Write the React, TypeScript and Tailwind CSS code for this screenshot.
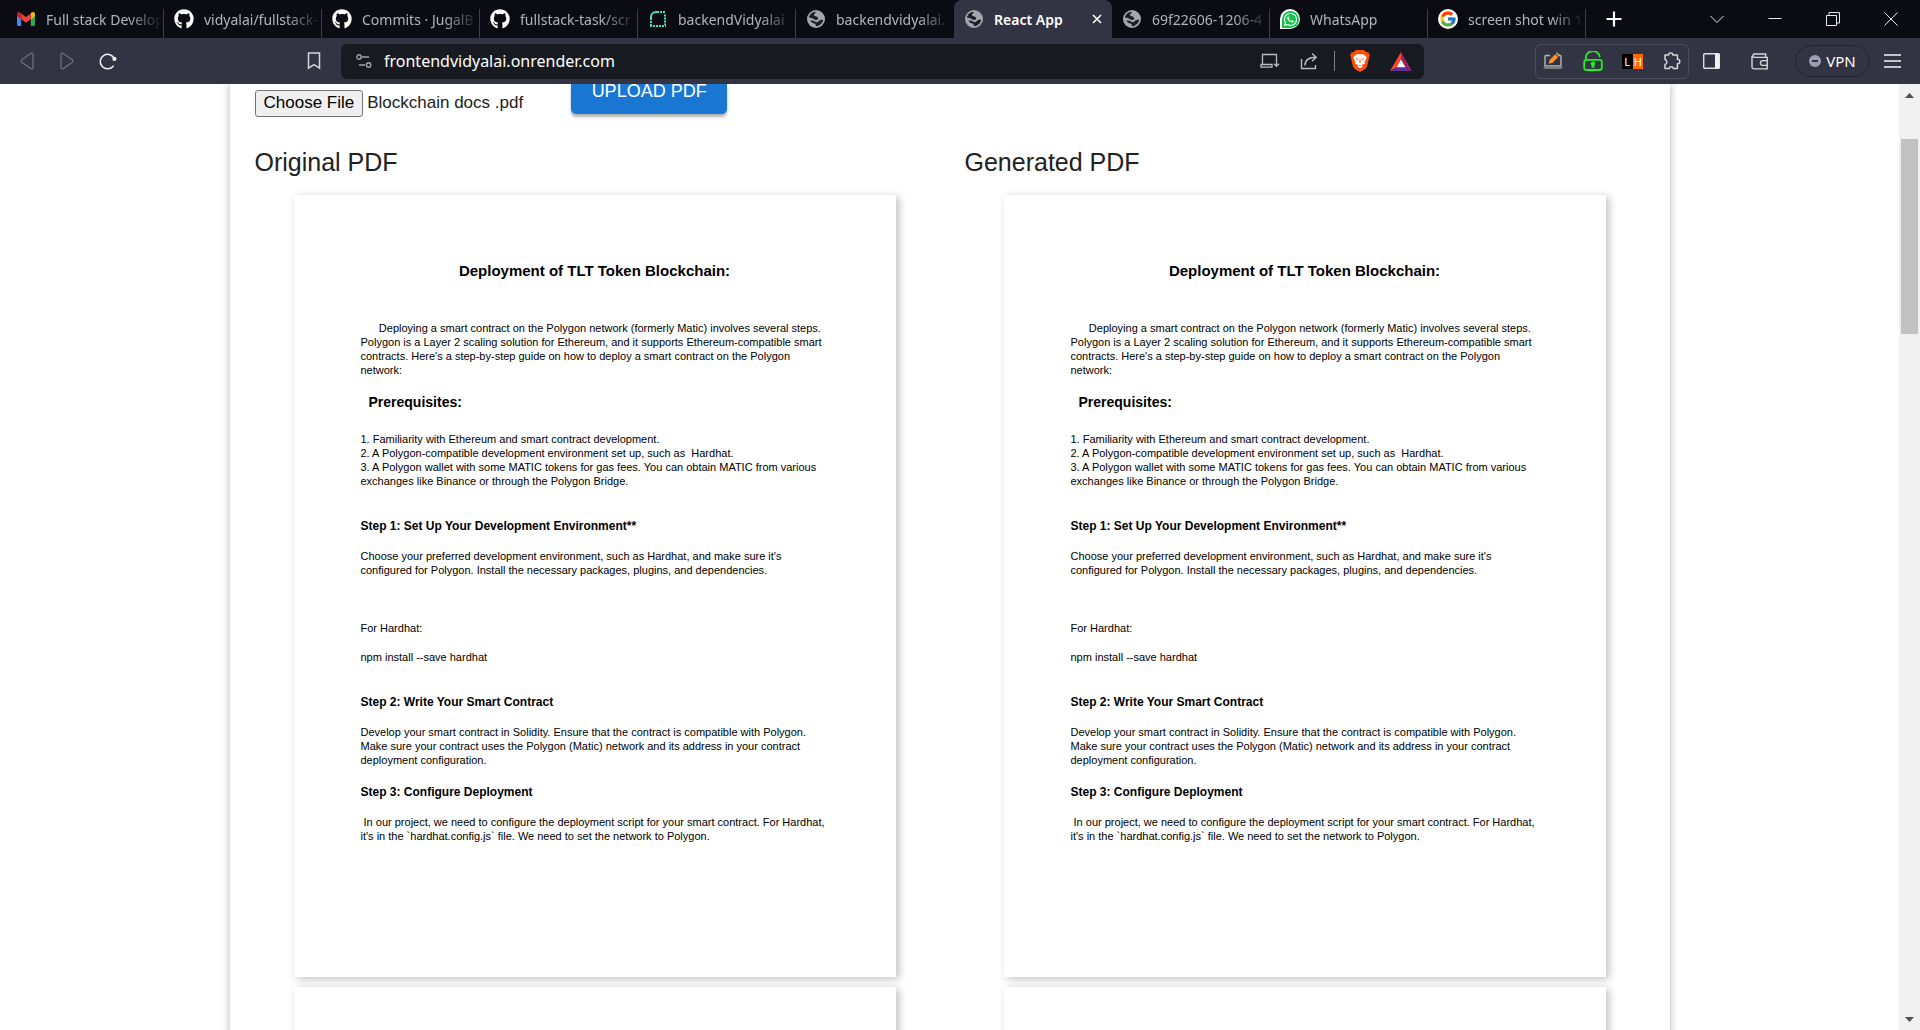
import React from 'react';
import { FaGithub, FaWhatsapp } from 'react-icons/fa';
import { FcGoogle } from 'react-icons/fc';

type IconProps = { className?: string };

function GmailIcon() {
  return (
    <svg viewBox="0 0 18 14" className="h-[14px] w-[18px]">
      <path d="M0 2.2V12.6C0 13.4.6 14 1.4 14H4.2V5.6Z" fill="#4285f4" />
      <path d="M18 2.2V12.6C18 13.4 17.4 14 16.6 14H13.8V5.6Z" fill="#34a853" />
      <path d="M13.8 1.4V7.2L18 4V2.2C18 .3 16 -.7 14.5 .6Z" fill="#fbbc04" />
      <path d="M0 2.2V4L4.2 7.2V1.4L3.5.8C2-.6 0 .3 0 2.2Z" fill="#c5221f" />
      <path d="M4.2 7.2V1.4L9 5 13.8 1.4V7.2L9 10.8Z" fill="#ea4335" />
    </svg>
  );
}

function GithubIcon() {
  return <FaGithub className="size-5 text-white" />;
}

function RenderIcon() {
  return (
    <svg viewBox="0 0 16 16" className="size-4" fill="none" stroke="#46e3b7" strokeWidth="2">
      <path d="M1 9V6A5 5 0 0 1 6 1H9" />
      <path d="M10 1H16" strokeDasharray="2 1" />
      <path d="M15 3.5V14" strokeDasharray="2 1" />
      <path d="M1 10V14" strokeDasharray="2 1" />
      <path d="M0 15H16" strokeDasharray="2 1" />
    </svg>
  );
}

function GlobeIcon() {
  return (
    <svg viewBox="0 0 18 18" className="size-[18px]">
      <circle cx="9" cy="9" r="9" fill="#a3a6ad" />
      <path
        d="M1.9 7.6C2.5 4.6 5.2 2 8.6 1.8 9 3 7.6 3.4 7 4.6 6.6 5.6 7.8 6.2 9.2 6.4 11.2 6.8 11.8 8.4 10.6 9.6 9.6 10.4 8 9.8 7 9.2 5.4 8.2 3.8 8 1.9 7.6Z"
        fill="#1d1e28"
      />
      <path
        d="M3.4 10.4C5.4 10.4 7.4 10.8 8.4 11.8 9.4 12.4 10.6 12.2 11.4 11.4 12.4 10.2 14 9.8 16.2 9.8 15.6 13.4 12.6 16.2 9 16.2 8.6 15 8.8 14.2 7.6 13.6 6 13 4.2 12.4 3.4 10.4Z"
        fill="#1d1e28"
      />
    </svg>
  );
}

function WhatsAppIcon() {
  return (
    <span className="flex size-5 items-center justify-center rounded-full rounded-bl-sm bg-white">
      <span className="flex size-[17px] items-center justify-center rounded-full rounded-bl-sm bg-[#12c04a]">
        <FaWhatsapp className="size-[15px] text-white" />
      </span>
    </span>
  );
}

function GoogleIcon() {
  return (
    <span className="flex size-5 items-center justify-center rounded-full bg-white">
      <FcGoogle className="size-[18px]" />
    </span>
  );
}

type Tab = { title: string; icon: React.ReactNode; active?: boolean; bar?: boolean };

const tabs: Tab[] = [
  { title: 'Full stack Develop', icon: <GmailIcon />, bar: true },
  { title: 'vidyalai/fullstack-', icon: <GithubIcon />, bar: true },
  { title: 'Commits · JugalB', icon: <GithubIcon />, bar: true },
  { title: 'fullstack-task/scr', icon: <GithubIcon />, bar: true },
  { title: 'backendVidyalai', icon: <RenderIcon />, bar: true },
  { title: 'backendvidyalai.', icon: <GlobeIcon /> },
  { title: 'React App', icon: <GlobeIcon />, active: true },
  { title: '69f22606-1206-4', icon: <GlobeIcon />, bar: true },
  { title: 'WhatsApp', icon: <WhatsAppIcon />, bar: true },
  { title: 'screen shot win 1', icon: <GoogleIcon />, bar: true },
];

function TabIcon({ children }: { children: React.ReactNode }) {
  return <span className="flex size-5 shrink-0 items-center justify-center">{children}</span>;
}

function TabItem({ tab }: { tab: Tab }) {
  if (tab.active) {
    return (
      <div className="flex h-full min-w-0 items-center gap-[10px] rounded-t-lg bg-[#323443] px-[10px]">
        <TabIcon>{tab.icon}</TabIcon>
        <button className="min-w-0 flex-1 text-left font-semibold whitespace-nowrap text-white">{tab.title}</button>
        <button aria-label="Close tab" className="shrink-0 text-white">
          <svg viewBox="0 0 10 10" className="size-[10px]" stroke="currentColor" strokeWidth="1.6">
            <path d="M1 1L9 9M9 1L1 9" />
          </svg>
        </button>
      </div>
    );
  }
  return (
    <div className="flex h-full min-w-0 items-end">
      <button className="flex h-full min-w-0 flex-1 items-center gap-[10px] pl-[10px] text-[#b4b4b8]">
        <TabIcon>{tab.icon}</TabIcon>
        <span className="min-w-0 flex-1 overflow-hidden text-left whitespace-nowrap [mask-image:linear-gradient(to_right,black_70%,transparent)]">
          {tab.title}
        </span>
      </button>
      <span className={tab.bar ? 'h-[29px] w-px bg-[#3f3f45]' : 'w-px'} />
    </div>
  );
}

function TabStrip() {
  return (
    <div className="flex h-[38px] items-center bg-[#0b0b14] pl-[6px] font-['Noto_Sans',sans-serif] text-[14px]">
      <div className="grid h-full w-[1580px] min-w-0 grid-cols-10">
        {tabs.map((t) => (
          <TabItem key={t.title} tab={t} />
        ))}
      </div>
      <button aria-label="New tab" className="ml-5 shrink-0 text-white">
        <svg viewBox="0 0 16 16" className="size-4" stroke="currentColor" strokeWidth="2.2">
          <path d="M8 0.5V15.5M0.5 8H15.5" />
        </svg>
      </button>
      <div className="ml-auto flex shrink-0 items-center gap-11 pr-[22px] text-[#e8e8ea]">
        <button aria-label="Search tabs">
          <svg viewBox="0 0 14 14" className="size-[14px]" fill="none" stroke="currentColor" strokeWidth="1">
            <path d="M0.5 4L7 10.5 13.5 4" />
          </svg>
        </button>
        <button aria-label="Minimize">
          <svg viewBox="0 0 14 14" className="size-[14px]" stroke="currentColor" strokeWidth="1">
            <path d="M0.5 6.5H13.5" />
          </svg>
        </button>
        <button aria-label="Restore">
          <svg viewBox="0 0 14 14" className="size-[14px]" fill="none" stroke="currentColor" strokeWidth="1">
            <path d="M0.5 3.5H10.5V13.5H0.5ZM3 3V0.5H13.5V11H11" />
          </svg>
        </button>
        <button aria-label="Close">
          <svg viewBox="0 0 14 14" className="size-[14px]" stroke="currentColor" strokeWidth="1">
            <path d="M0.5 0.5L13.5 13.5M13.5 0.5L0.5 13.5" />
          </svg>
        </button>
      </div>
    </div>
  );
}

function BackIcon({ className }: IconProps) {
  return (
    <svg viewBox="0 0 14 18" className={className} fill="none" stroke="#6c6e7b" strokeWidth="1.3" strokeLinejoin="round">
      <path d="M11 1.3L1.8 7.8C1 8.4 1 9.6 1.8 10.2L11 16.7C12 17.2 13 16.6 13 15.6V2.4C13 1.4 12 .8 11 1.3Z" />
    </svg>
  );
}

function ReloadIcon() {
  return (
    <svg viewBox="0 0 18 18" className="size-[18px]" fill="none" stroke="#f2f2f4" strokeWidth="1.5" strokeLinecap="round">
      <path d="M15.4 7A7.3 7.3 0 1 0 14.2 14.2" />
      <circle cx="15.4" cy="6.9" r="2.1" fill="#f2f2f4" stroke="none" />
    </svg>
  );
}

function InstallIcon() {
  return (
    <svg viewBox="0 0 20 16" className="h-4 w-5" fill="none" stroke="#b9bbc0" strokeWidth="1.3">
      <path d="M16.5 8V1.5H2.5V11.5" />
      <path d="M1 11.5H12V14.2H1Z" />
      <path d="M16.5 7.5V13M14 10.8L16.5 13.3 19 10.8" />
    </svg>
  );
}

function ShareIcon() {
  return (
    <svg viewBox="0 0 18 18" className="size-[18px]" fill="none" stroke="#b9bbc0" strokeWidth="1.4">
      <path d="M1.5 7V16.5H15.5V13" />
      <path d="M5 13.5C5 8 8 5.3 16 5.3M12 1.5L16.2 5.3 12 9.3" />
    </svg>
  );
}

function BraveIcon() {
  return (
    <svg viewBox="0 0 20 22" className="h-[22px] w-5">
      <path d="M6 0H14L16.4 2.2 18.4 2.3 20 5 19.2 7.2 17.2 16C16.8 17.6 15.6 18.6 14 19.8L10 22 6 19.8C4.4 18.6 3.2 17.6 2.8 16L.8 7.2 0 5 1.6 2.3 3.6 2.2Z" fill="#fb5006" />
      <path
        d="M10 4.4L12.4 4 15.6 5.8 16.6 7.6 16 9.4 14.4 12 15 13.4 13.4 14.8 11.6 14 12.6 16.4 10 18.2 7.4 16.4 8.4 14 6.6 14.8 5 13.4 5.6 12 4 9.4 3.4 7.6 4.4 5.8 7.6 4Z"
        fill="#fff"
      />
      <path d="M5.6 8L8.4 9 8 10.4ZM14.4 8L11.6 9 12 10.4ZM10 8.2L10.8 12 10 13 9.2 12ZM8 16L10 15 12 16" fill="#fb5006" />
    </svg>
  );
}

function BatIcon() {
  return (
    <svg viewBox="0 0 22 19" className="h-[19px] w-[22px]">
      <path d="M11 0L0 19 6.6 15.2 11 7.6Z" fill="#ff4724" />
      <path d="M11 0L22 19 15.4 15.2 11 7.6Z" fill="#9e1f63" />
      <path d="M0 19H22L15.4 15.2H6.6Z" fill="#662d91" />
      <path d="M11 7.6L15.4 15.2H6.6Z" fill="#fff" />
    </svg>
  );
}

function EditScreenIcon() {
  return (
    <svg viewBox="0 0 20 18" className="h-[18px] w-5">
      <path d="M7 3.5H3A1 1 0 0 0 2 4.5V14H18V4.5A1 1 0 0 0 17 3.5H15.5" fill="none" stroke="#b4b6bd" strokeWidth="1.4" />
      <path d="M0.5 14.5H19.5V15.5L18.5 17H1.5L.5 15.5Z" fill="#7b7c82" />
      <path d="M5.6 11.8L6.6 8 12.2 2.2 15.2 5 9.6 10.8Z" fill="#ff9020" />
      <path d="M12.9 1.5L14 .4 16.9 3.2 15.9 4.3Z" fill="#ffa94d" />
    </svg>
  );
}

function LockIcon() {
  return (
    <svg viewBox="0 0 20 20" className="size-5" fill="none" stroke="#22f01e" strokeWidth="1.8">
      <rect x="1.2" y="8.8" width="17.6" height="10.2" rx="2" />
      <path d="M3 8.5V7.5A6.8 6.2 0 0 1 16.6 5.4" strokeLinecap="round" />
      <circle cx="10" cy="12.8" r="2.2" fill="#22f01e" stroke="none" />
      <path d="M9 13H11L11.6 16.8H8.4Z" fill="#22f01e" stroke="none" />
    </svg>
  );
}

function PuzzleIcon() {
  return (
    <svg viewBox="0 0 18 18" className="size-[18px]" fill="none" stroke="#d5d6da" strokeWidth="1.5" strokeLinejoin="round">
      <path d="M2 3H5.6C5.4 .2 10 .2 9.8 3H14.4V7.2C17.6 7.2 17.6 11.6 14.4 11.8V16.6H10.4C10 14.2 6.6 14.2 6.2 16.6H2V12.6C4.4 12.2 4.4 8.2 2 7.6Z" />
    </svg>
  );
}

function SidebarIcon() {
  return (
    <svg viewBox="0 0 17 16" className="h-4 w-[17px]">
      <rect x="0.7" y="0.7" width="15.6" height="14.6" rx="1" fill="none" stroke="#dedfe3" strokeWidth="1.4" />
      <path d="M12 0.5H16.5V15.5H12Z" fill="#f0f0f3" />
    </svg>
  );
}

function WalletIcon() {
  return (
    <svg viewBox="0 0 18 17" className="h-[17px] w-[18px]" fill="none" stroke="#d5d6da" strokeWidth="1.4">
      <path d="M14.6 4V1H3A1.9 1.9 0 0 0 3 4.4H16.2V15.9H3A2 2 0 0 1 1 13.9V2.8" />
      <path d="M17 7.6H11.8A2.4 2.4 0 0 0 11.8 12.4H17" />
    </svg>
  );
}

function Toolbar() {
  return (
    <div className="flex h-[46px] items-center bg-[#323443] font-['Noto_Sans',sans-serif]">
      <div className="flex w-[341px] shrink-0 items-center px-5">
        <button aria-label="Back">
          <BackIcon className="h-[18px] w-[14px]" />
        </button>
        <button aria-label="Forward" className="ml-[26px]">
          <BackIcon className="h-[18px] w-[14px] -scale-x-100" />
        </button>
        <button aria-label="Reload" className="ml-[25px]">
          <ReloadIcon />
        </button>
        <button aria-label="Bookmark" className="ml-auto">
          <svg viewBox="0 0 14 18" className="h-[18px] w-[14px]" fill="none" stroke="#d5d6da" strokeWidth="1.5">
            <path d="M1.5 1H12.5V16.2L7 12.6 1.5 16.2Z" />
          </svg>
        </button>
      </div>
      <div className="flex h-[35px] min-w-0 flex-1 items-center rounded-md bg-[#181a21] pr-3 pl-[15px]">
        <svg viewBox="0 0 16 14" className="h-[14px] w-4 shrink-0" fill="none" stroke="#a2a4ab" strokeWidth="1.4">
          <circle cx="3" cy="3" r="2.2" />
          <path d="M6 3H13M3 11H9" />
          <circle cx="12.6" cy="11" r="2.2" />
        </svg>
        <input
          aria-label="Address"
          className="ml-3 min-w-0 flex-1 bg-transparent text-base text-white outline-none"
          defaultValue="frontendvidyalai.onrender.com"
        />
        <div className="flex shrink-0 items-center">
          <button aria-label="Install app">
            <InstallIcon />
          </button>
          <button aria-label="Share" className="ml-5">
            <ShareIcon />
          </button>
          <span className="ml-4 h-5 w-px bg-[#7d7f87]" />
          <button aria-label="Shields" className="ml-[15px]">
            <BraveIcon />
          </button>
          <button aria-label="Rewards" className="ml-5">
            <BatIcon />
          </button>
        </div>
      </div>
      <div className="ml-[111px] flex shrink-0 items-center pr-[19px]">
        <div className="flex h-[35px] items-center rounded-md border border-[#4a4c5b] px-[7px]">
          <button aria-label="Screen editor">
            <EditScreenIcon />
          </button>
          <button aria-label="Unlock" className="ml-5">
            <LockIcon />
          </button>
          <button aria-label="Lighthouse" className="ml-[19px] flex h-[15px] w-[21px] text-[11px] leading-[15px] text-white">
            <span className="w-1/2 bg-black text-center">L</span>
            <span className="w-1/2 bg-[#ff6a00] text-center">H</span>
          </button>
          <button aria-label="Extensions" className="ml-5">
            <PuzzleIcon />
          </button>
        </div>
        <button aria-label="Sidebar" className="ml-[14px]">
          <SidebarIcon />
        </button>
        <button aria-label="Wallet" className="ml-[31px]">
          <WalletIcon />
        </button>
        <button className="ml-[26px] flex h-8 w-[75px] items-center justify-center gap-[5px] rounded-full border border-[#22232f] text-[15px] text-white">
          <span className="flex size-3 items-center justify-center rounded-full bg-[#9c9db5]">
            <span className="h-[2px] w-[6px] bg-[#323443]" />
          </span>
          VPN
        </button>
        <button aria-label="Menu" className="ml-[14px] flex w-[17px] flex-col gap-1 py-1">
          <span className="h-[2px] bg-[#c4c5ca]" />
          <span className="h-[2px] bg-[#c4c5ca]" />
          <span className="h-[2px] bg-[#c4c5ca]" />
        </button>
      </div>
    </div>
  );
}

function PageText({ lines, className }: { lines: string[]; className: string }) {
  return (
    <p className={className}>
      {lines.map((l) => (
        <span key={l} className="block whitespace-pre">
          {l}
        </span>
      ))}
    </p>
  );
}

function StepHeading({ children }: { children: React.ReactNode }) {
  return <h4 className="text-[12px] leading-4 font-bold">{children}</h4>;
}

function DocumentPage() {
  return (
    <article className="h-[782px] w-[602px] bg-white px-[67px] pt-[66px] text-[11px] leading-[14px] text-black shadow-[3px_2px_8px_rgba(0,0,0,0.25)]">
      <h3 className="text-center text-[15px] leading-5 font-bold">Deployment of TLT Token Blockchain:</h3>
      <PageText
        className="mt-10"
        lines={[
          '      Deploying a smart contract on the Polygon network (formerly Matic) involves several steps.',
          'Polygon is a Layer 2 scaling solution for Ethereum, and it supports Ethereum-compatible smart',
          "contracts. Here's a step-by-step guide on how to deploy a smart contract on the Polygon",
          'network:',
        ]}
      />
      <h4 className="mt-4 pl-2 text-[14px] leading-[18px] font-bold">Prerequisites:</h4>
      <PageText
        className="mt-[21px]"
        lines={[
          '1. Familiarity with Ethereum and smart contract development.',
          '2. A Polygon-compatible development environment set up, such as  Hardhat.',
          '3. A Polygon wallet with some MATIC tokens for gas fees. You can obtain MATIC from various',
          'exchanges like Binance or through the Polygon Bridge.',
        ]}
      />
      <div className="mt-[30px]">
        <StepHeading>Step 1: Set Up Your Development Environment**</StepHeading>
      </div>
      <PageText
        className="mt-[15px]"
        lines={[
          "Choose your preferred development environment, such as Hardhat, and make sure it's",
          'configured for Polygon. Install the necessary packages, plugins, and dependencies.',
        ]}
      />
      <p className="mt-11">For Hardhat:</p>
      <p className="mt-[15px]">npm install --save hardhat</p>
      <div className="mt-[30px]">
        <StepHeading>Step 2: Write Your Smart Contract</StepHeading>
      </div>
      <PageText
        className="mt-[15px]"
        lines={[
          'Develop your smart contract in Solidity. Ensure that the contract is compatible with Polygon.',
          'Make sure your contract uses the Polygon (Matic) network and its address in your contract',
          'deployment configuration.',
        ]}
      />
      <div className="mt-[17px]">
        <StepHeading>Step 3: Configure Deployment</StepHeading>
      </div>
      <PageText
        className="mt-[15px]"
        lines={[
          ' In our project, we need to configure the deployment script for your smart contract. For Hardhat,',
          "it's in the `hardhat.config.js` file. We need to set the network to Polygon.",
        ]}
      />
    </article>
  );
}

function BlankPage() {
  return <article className="h-[782px] w-[602px] bg-white shadow-[3px_2px_8px_rgba(0,0,0,0.25)]" />;
}

function PdfColumn({ title }: { title: string }) {
  return (
    <section className="min-w-0">
      <h2 className="text-[25px] leading-8 text-[#212121]">{title}</h2>
      <div className="mt-[17px] flex flex-col items-center gap-[10px]">
        <DocumentPage />
        <BlankPage />
      </div>
    </section>
  );
}

function ScrollBar() {
  return (
    <div className="flex w-[21px] shrink-0 flex-col items-center bg-[#f1f1f1]" aria-hidden="true">
      <svg viewBox="0 0 9 5" className="mt-[9px] h-[5px] w-[9px]" fill="#505050">
        <path d="M4.5 0L9 5H0Z" />
      </svg>
      <div className="mt-[41px] h-[195px] w-[17px] bg-[#c1c1c1]" />
      <svg viewBox="0 0 9 5" className="mt-auto mb-2 h-[5px] w-[9px]" fill="#505050">
        <path d="M4.5 5L9 0H0Z" />
      </svg>
    </div>
  );
}

export default function App() {
  return (
    <div className="flex h-screen flex-col overflow-hidden bg-white">
      <header className="shrink-0">
        <TabStrip />
        <Toolbar />
      </header>
      <div className="flex min-h-0 flex-1">
        <main className="min-w-0 flex-1 overflow-hidden font-['Liberation_Sans',Arial,sans-serif]">
          <div className="mx-auto max-w-[1440px] bg-white px-[25px] shadow-[0_0_8px_rgba(0,0,0,0.3)]">
            <div className="flex items-start">
              <div className="flex items-center pt-[6px]">
                <input id="pdf-file" type="file" className="sr-only" />
                <label
                  htmlFor="pdf-file"
                  className="flex h-[27px] items-center rounded-[3px] border border-[#767676] bg-[#efefef] px-2 pb-px text-[17px] text-black"
                >
                  Choose File
                </label>
                <span className="ml-1 pb-px text-[17px] text-[#212121]">Blockchain docs .pdf</span>
              </div>
              <button className="ml-12 h-[30px] min-w-[156px] rounded-b-[5px] bg-[#1976d2] pb-4 text-[18px] leading-[14px] text-white shadow-[0_3px_3px_rgba(0,0,0,0.3)]">
                UPLOAD PDF
              </button>
            </div>
            <div className="mt-[29px] grid grid-cols-2 gap-[30px]">
              <PdfColumn title="Original PDF" />
              <PdfColumn title="Generated PDF" />
            </div>
          </div>
        </main>
        <ScrollBar />
      </div>
    </div>
  );
}
